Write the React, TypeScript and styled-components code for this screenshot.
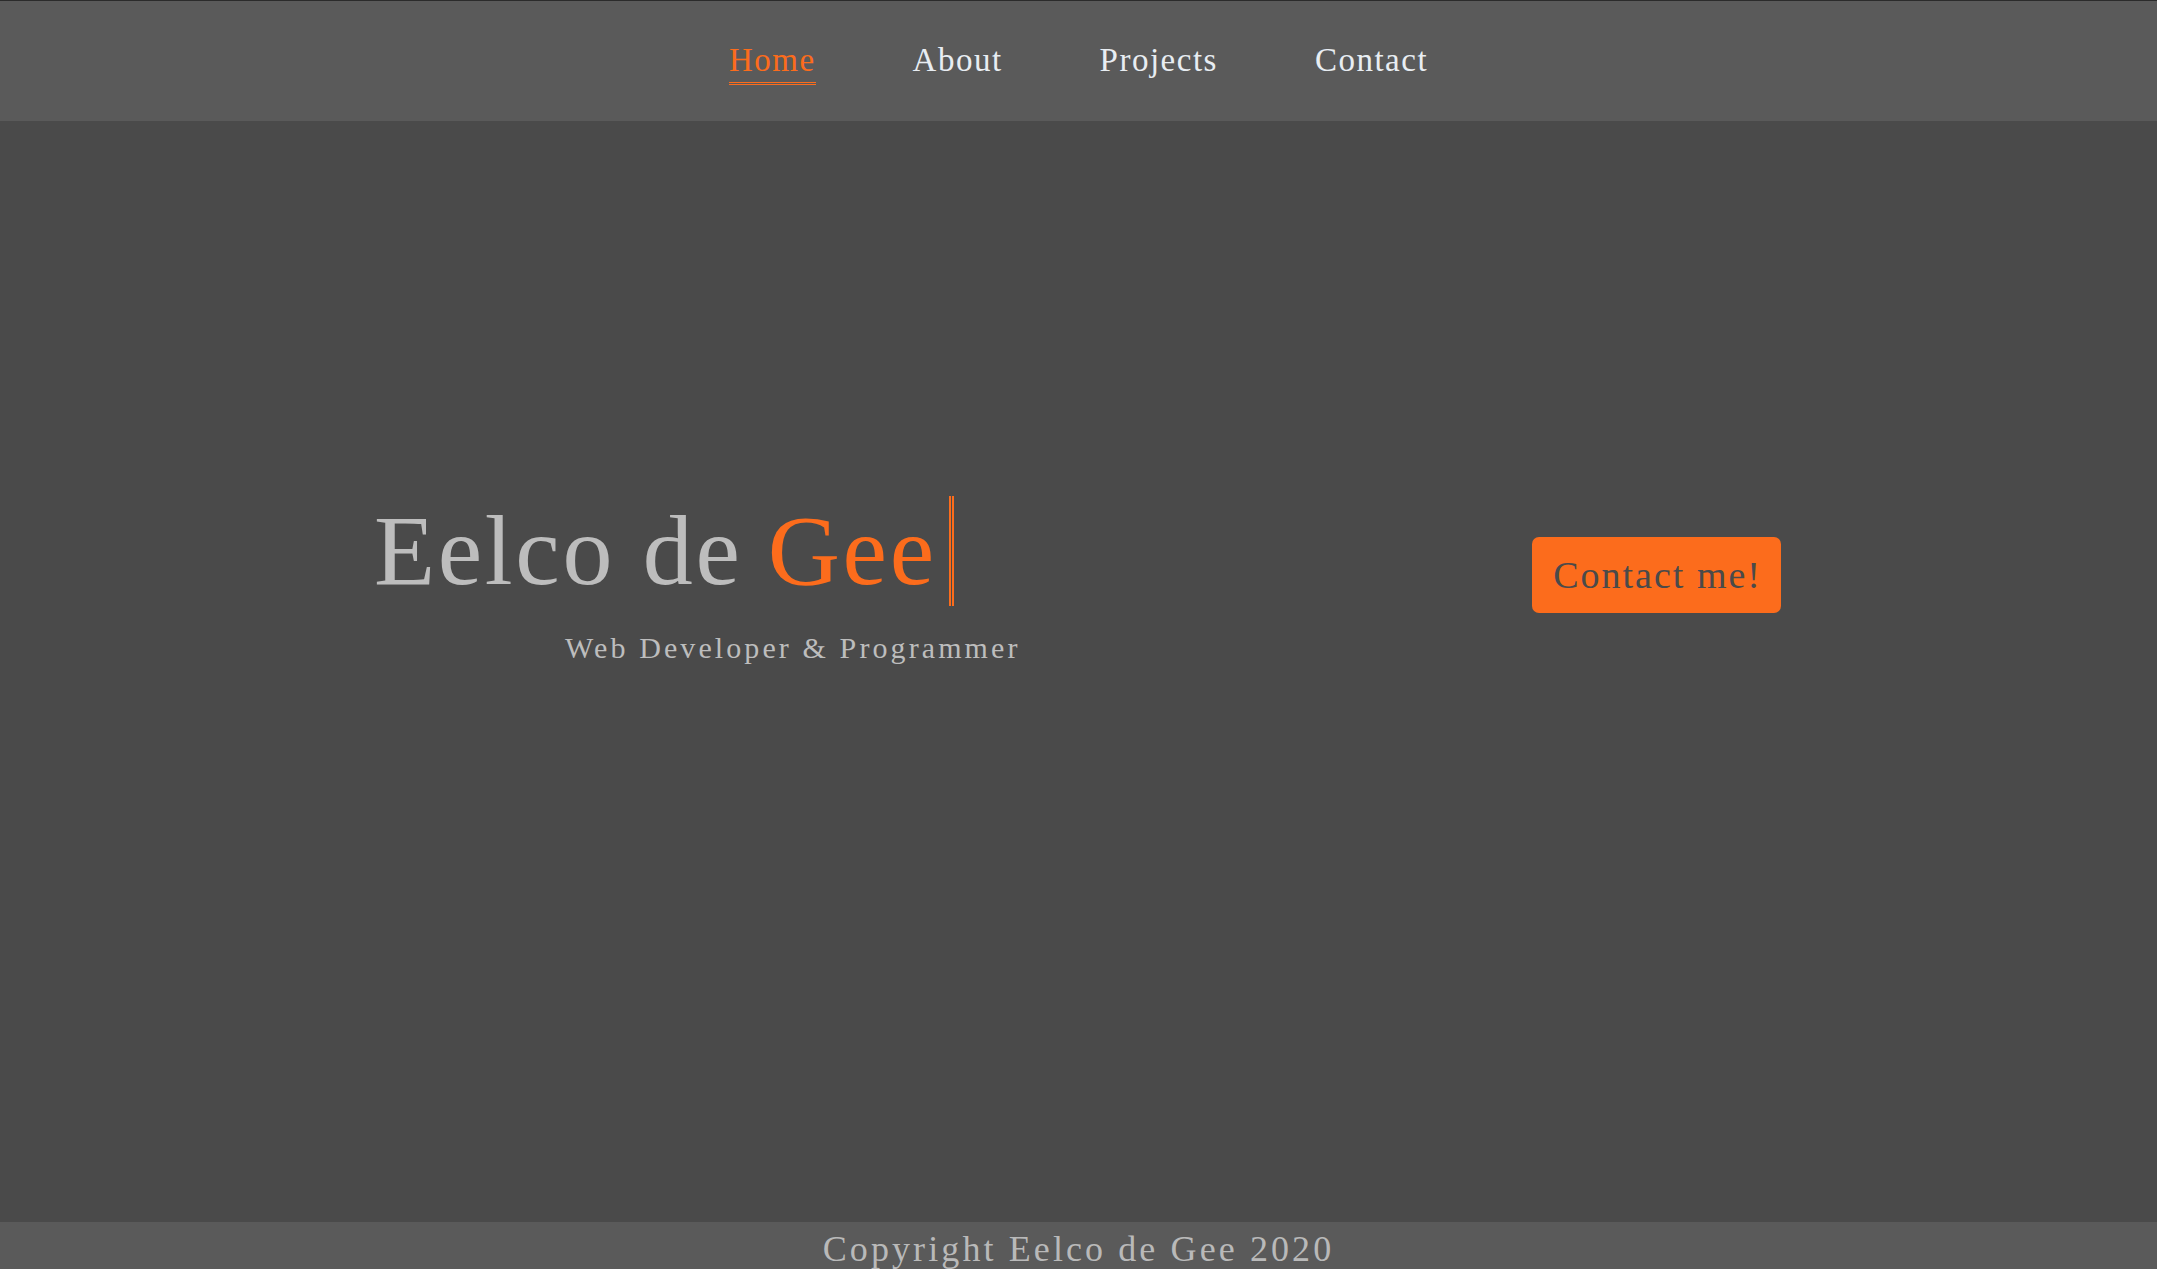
import React from "react";
import { styled, createGlobalStyle } from "styled-components";

const GlobalStyle = createGlobalStyle`
    html, body {
        margin: 0;
        padding: 0;
        background: #4a4a4a;
        font-family: "Liberation Serif", Georgia, serif;
    }
`;

const ORANGE = "#fc6c1c";

const NavBar = styled.nav`
    height: 120px;
    border-top: 1px solid #2b2b2b;
    background: #5a5a5a;
    display: flex;
    align-items: flex-start;
    justify-content: center;
    gap: 97px;
`;

const NavLink = styled.a<{ $active?: boolean }>`
    margin-top: 39px;
    font-size: 33px;
    line-height: 40px;
    letter-spacing: 1.5px;
    color: ${(p) => (p.$active ? ORANGE : "#e8edf2")};
    text-decoration: none;
    padding-bottom: 2px;
    border-bottom: 3px double ${(p) => (p.$active ? ORANGE : "transparent")};
    cursor: pointer;
`;

const Hero = styled.main`
    height: 1101px;
    box-sizing: border-box;
    display: flex;
    align-items: center;
    justify-content: space-between;
    padding: 0 376px 187px 374px;
`;

const Intro = styled.div`
    display: flex;
    flex-direction: column;
    margin-top: 4px;
`;

const Title = styled.h1`
    margin: 0;
    display: flex;
    align-items: center;
    font-weight: normal;
    font-size: 100px;
    line-height: 110px;
    letter-spacing: 2.7px;
    color: #bdbdbd;
`;

const Accent = styled.span`
    color: ${ORANGE};
    margin-left: 0.25em;
`;

const Caret = styled.span`
    display: inline-block;
    width: 0;
    height: 110px;
    margin-left: 12px;
    border-left: 5px double ${ORANGE};
`;

const Subtitle = styled.p`
    margin: 25px 0 0 191px;
    font-size: 30px;
    line-height: 34px;
    letter-spacing: 3.1px;
    color: #bdbdbd;
`;

const ContactButton = styled.button`
    height: 76px;
    margin-bottom: 6px;
    padding: 0 19px 0 21px;
    border: none;
    border-radius: 7px;
    background: ${ORANGE};
    color: #4a4a4a;
    font-family: "Liberation Serif", Georgia, serif;
    font-size: 38px;
    letter-spacing: 2px;
    cursor: pointer;
`;

const Footer = styled.footer`
    height: 60px;
    box-sizing: border-box;
    padding-top: 3px;
    background: #5a5a5a;
    display: flex;
    justify-content: center;
    font-size: 36px;
    line-height: 48px;
    letter-spacing: 3.1px;
    color: #b9b9b9;
`;

const links = ["Home", "About", "Projects", "Contact"];

const App = () => {
    return (
        <>
            <GlobalStyle />
            <NavBar>
                {links.map((l) => (
                    <NavLink key={l} $active={l === "Home"}>
                        {l}
                    </NavLink>
                ))}
            </NavBar>
            <Hero>
                <Intro>
                    <Title>
                        Eelco de<Accent>Gee</Accent>
                        <Caret />
                    </Title>
                    <Subtitle>Web Developer &amp; Programmer</Subtitle>
                </Intro>
                <ContactButton>Contact me!</ContactButton>
            </Hero>
            <Footer>Copyright Eelco de Gee 2020</Footer>
        </>
    );
};

export default App;
